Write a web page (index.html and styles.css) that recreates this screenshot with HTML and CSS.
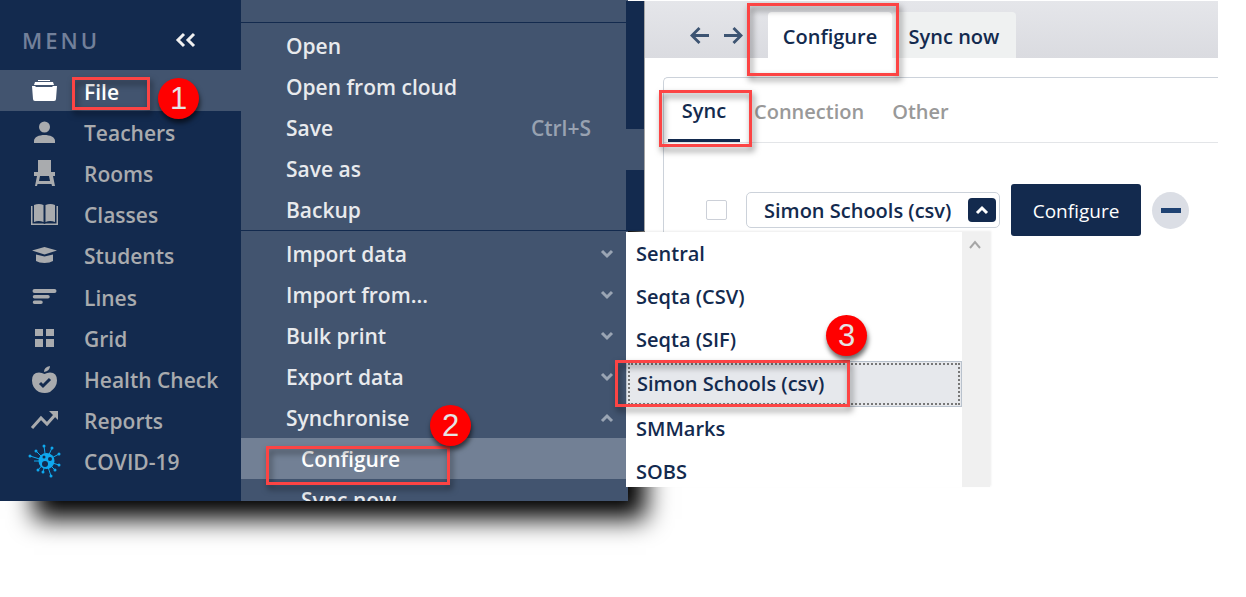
FILE: index.html
```html
<!DOCTYPE html>
<html lang="en">
<head>
  <meta charset="utf-8">
  <title>Synchronise - Configure</title>
  <link rel="stylesheet" href="styles.css">
</head>
<body>
  <div class="app">
    <div class="panels">
      <nav class="sidebar">
        <header class="sidebar-header">
          <h1>MENU</h1>
          <button class="collapse" aria-label="Collapse menu">
            <svg width="22" height="16" viewBox="0 0 22 16"><path d="M9 2L3 8l6 6M19 2l-6 6 6 6"/></svg>
          </button>
        </header>
        <ul class="nav-list">
          <li class="active"><a href="#"><svg viewBox="0 0 30 30"><path d="M8 3h12v1H8zM5 5h18l1 3H4zM2 9h3l1 1h16l1-1h4l-1 13q0 2-2 2H5q-2 0-2-2z"/></svg>File</a></li>
          <li><a href="#"><svg viewBox="0 0 30 30"><circle cx="14.5" cy="9" r="5.5"/><path d="M4 25v-2c0-4 5-6 10.500-6S25 19 25 23v2z"/></svg>Teachers</a></li>
          <li><a href="#"><svg viewBox="0 0 30 30"><path d="M8 1h13v12h4v4h-2l2 10h-3l-.5-2h-14L7 27H5l2-10H4v-4h4zM10 17l-1 5h11l-1-5z"/></svg>Rooms</a></li>
          <li><a href="#"><svg viewBox="0 0 30 30"><path d="M4 5q5-2 9.500 0v17q-5-2-9.500 0zM15.500 5q5-2 9.500 0v17q-5-2-9.500 0zM1 6h1.500v17.500H13l1.500 .5 1.500-.5h10.500V6H28v19H1z"/></svg>Classes</a></li>
          <li><a href="#"><svg viewBox="0 0 30 30"><path d="M2 9.500L14.500 6 27 9.500 14.500 13.500zM6 13.500l8.500 2 8.500-2V20q-3 2-8.500 2T6 20z"/></svg>Students</a></li>
          <li><a href="#"><svg viewBox="0 0 30 30"><path d="M4.500 6h20a1.500 1.500 0 0 1 0 4h-20a1.500 1.500 0 0 1 0-4zM4.500 12H18a1 1 0 0 1 0 3.500H4.500a1.500 1.500 0 0 1 0-3.500zM4.500 17.500H11a1 1 0 0 1 0 3.500H4.500a1.500 1.500 0 0 1 0-3.500z"/></svg>Lines</a></li>
          <li><a href="#"><svg viewBox="0 0 30 30"><path d="M5 5h8v7H5zM16 5h8v7h-8zM5 15h8v8H5zM16 15h8v8h-8z"/></svg>Grid</a></li>
          <li><a href="#"><svg viewBox="0 0 30 30"><path d="M14 7q0-5 6-6 0 5-6 6zM9 7.500q3 0 5.500 1.500Q17 7.500 20 7.500q7 0 7 8Q27 22 20 27q-5 2-11 0-7-4-7-11.500 0-8 7-8z"/><path class="tick" d="M10 18l3 3 7-7"/></svg>Health Check</a></li>
          <li><a href="#"><svg viewBox="0 0 30 30"><path class="line" d="M2 22l9-10 6 6 8-9"/><path d="M19 5h9v9z"/></svg>Reports</a></li>
          <li><a href="#"><svg class="virus" viewBox="0 0 30 30"><path class="spikes" d="M16 14L14-1M16 14l6-13M16 14L6 4M16 14L0 9M16 14L4 14M16 14L8 23M16 14l-3 11M16 14l5 15M16 14l9 9M16 14l13 4M16 14l13-7"/><path class="tips" d="M14-1v0M22 1v0M6 4v0M0 9v0M8 23v0M13 25v0M21 29v0M25 23v0M29 18v0M29 7v0"/><circle cx="16.500" cy="14" r="8"/><circle class="hole" cx="14" cy="10" r="1.500"/><circle class="hole" cx="20" cy="12" r="2"/><circle class="hole" cx="15" cy="17" r="3"/></svg>COVID-19</a></li>
        </ul>
      </nav>
      <div class="submenu">
        <div class="submenu-top"></div>
        <ul class="menu-group">
          <li><a href="#">Open</a></li>
          <li><a href="#">Open from cloud</a></li>
          <li><a href="#">Save <kbd>Ctrl+S</kbd></a></li>
          <li><a href="#">Save as</a></li>
          <li><a href="#">Backup</a></li>
        </ul>
        <ul class="menu-group">
          <li><a href="#">Import data <svg class="chevron" viewBox="0 0 14 10"><path d="M2 2l5 5 5-5"/></svg></a></li>
          <li><a href="#">Import from... <svg class="chevron" viewBox="0 0 14 10"><path d="M2 2l5 5 5-5"/></svg></a></li>
          <li><a href="#">Bulk print <svg class="chevron" viewBox="0 0 14 10"><path d="M2 2l5 5 5-5"/></svg></a></li>
          <li><a href="#">Export data <svg class="chevron" viewBox="0 0 14 10"><path d="M2 2l5 5 5-5"/></svg></a></li>
          <li><a href="#">Synchronise <svg class="chevron" viewBox="0 0 14 10"><path d="M2 8l5-5 5 5"/></svg></a></li>
          <li class="child current"><a href="#">Configure</a></li>
          <li class="child cut"><a href="#">Sync now</a></li>
        </ul>
      </div>
    </div>

    <div class="rail"><span class="rail-active"></span></div>

    <main class="content">
      <div class="toolbar">
        <div class="history">
          <button aria-label="Back"><svg width="19" height="19" viewBox="0 0 20 20"><path d="M20 10H2M10 2l-8 8 8 8"/></svg></button>
          <button aria-label="Forward"><svg width="19" height="19" viewBox="0 0 20 20"><path d="M0 10h18M10 2l8 8-8 8"/></svg></button>
        </div>
        <a href="#" class="page-tab selected">Configure</a>
        <a href="#" class="page-tab">Sync now</a>
      </div>
      <section class="card">
        <div class="tabs">
          <a href="#" class="selected">Sync</a>
          <a href="#">Connection</a>
          <a href="#">Other</a>
        </div>
        <div class="sync-row">
          <input type="checkbox" aria-label="Enable sync">
          <div class="combo">
            <select aria-label="System">
              <option>Simon Schools (csv)</option>
            </select>
            <span class="combo-arrow"><svg width="14" height="10" viewBox="0 0 14 10"><path d="M2 8l5-5 5 5"/></svg></span>
            <div class="dropdown">
              <ul role="listbox" aria-label="Systems">
                <li role="option">Sentral</li>
                <li role="option">Seqta (CSV)</li>
                <li role="option">Seqta (SIF)</li>
                <li role="option" class="focused" aria-selected="true">Simon Schools (csv)</li>
                <li role="option">SMMarks</li>
                <li role="option">SOBS</li>
              </ul>
              <div class="scrollbar"><svg width="14" height="10" viewBox="0 0 14 10"><path d="M2 9l5-6 5 6"/></svg></div>
            </div>
          </div>
          <button class="configure">Configure</button>
          <button class="remove" aria-label="Remove"></button>
        </div>
      </section>
    </main>

    <!-- numbered steps -->
    <div class="mark mark-file"></div>
    <div class="mark mark-menu"></div>
    <div class="mark mark-page"></div>
    <div class="mark mark-sync"></div>
    <div class="mark mark-option"></div>
    <span class="step step-1">1</span>
    <span class="step step-2">2</span>
    <span class="step step-3">3</span>
  </div>
</body>
</html>
```
FILE: styles.css
```css
:root {
  --navy: #132a4e;
  --slate: #42546f;
  --slate-light: #728095;
  --red: #fc4444;
  --grey: #a9abae;
}

* {
  margin: 0;
  padding: 0;
  box-sizing: border-box;
}

body {
  min-height: 100vh;
  background: #fff;
  color: var(--navy);
  font-family: "Open Sans", "Noto Sans", sans-serif;
  font-size: 21px;
  font-weight: 600;
  line-height: 28px;
}

a {
  color: inherit;
  text-decoration: none;
}

ul {
  list-style: none;
}

button {
  border: none;
  background: none;
  font: inherit;
  color: inherit;
}

svg {
  fill: currentColor;
  flex: none;
}

.app {
  position: relative;
  display: flex;
  align-items: flex-start;
}

.panels {
  display: flex;
  box-shadow: 26px 26px 24px -8px #000;
}

/* left menu */
.sidebar {
  width: 241px;
  padding-bottom: 19px;
  background: var(--navy);
  color: var(--grey);
}

.sidebar-header {
  display: flex;
  align-items: center;
  justify-content: space-between;
  height: 70px;
  padding: 10px 44px 0 22px;
}

.sidebar-header h1 {
  color: #72809a;
  font-size: 22px;
  font-weight: 600;
  letter-spacing: 3px;
}

.collapse {
  display: flex;
  color: #f0f0f0;
}

.collapse path {
  fill: none;
  stroke: currentColor;
  stroke-width: 3;
}

.nav-list {
  display: grid;
  grid-auto-rows: 1fr;
  height: 412px;
}

.nav-list a {
  display: flex;
  align-items: center;
  gap: 24px;
  height: 100%;
  padding: 2px 0 0 30px;
}

.nav-list svg {
  width: 30px;
  height: 30px;
  overflow: visible;
}

.nav-list .active {
  background: var(--slate);
  color: #fff;
}

.tick {
  fill: none;
  stroke: var(--navy);
  stroke-width: 3;
}

.line {
  fill: none;
  stroke: currentColor;
  stroke-width: 3;
}

.virus {
  color: #0fa8ee;
}

.spikes {
  fill: none;
  stroke: currentColor;
  stroke-width: 1;
}

.tips {
  stroke: currentColor;
  stroke-width: 3;
  stroke-linecap: round;
}

.hole {
  fill: var(--navy);
}

/* File submenu */
.submenu {
  width: 387px;
  background: var(--slate);
  color: #e8eaed;
}

.submenu-top {
  height: 22px;
}

.menu-group {
  padding-top: 2px;
  border-top: 1px solid var(--navy);
}

.menu-group a {
  display: flex;
  align-items: center;
  justify-content: space-between;
  height: 41px;
  padding: 0 14px 0 45px;
}

.menu-group kbd {
  margin-right: 23px;
  color: #98a2b1;
  font: inherit;
}

.menu-group .child a {
  padding-left: 60px;
}

.menu-group .current {
  background: var(--slate-light);
  color: #fff;
}

.menu-group .cut {
  height: 22px;
  overflow: hidden;
}

.chevron {
  width: 14px;
  height: 10px;
  color: #9aa5b4;
}

.chevron path {
  fill: none;
  stroke: currentColor;
  stroke-width: 3;
}

/* strip of the collapsed sidebar behind the page */
.rail {
  position: relative;
  width: 19px;
  height: 230px;
  margin: 1px 0 0 -2px;
  padding-top: 128px;
  border-right: 1px solid #a5a5a5;
  background: var(--navy);
}

.rail-active {
  display: block;
  height: 41px;
  background: var(--slate);
}

.content {
  position: relative;
  flex: 1;
  margin: 1px 28px 0 0;
  background: #fff;
  font-size: 20px;
}

.toolbar {
  display: flex;
  height: 57px;
  padding: 11px 0 0 45px;
  background: linear-gradient(#e5e6ea, #dadbe0);
}

.history {
  display: flex;
  align-items: center;
  gap: 15px;
  margin-right: 25px;
}

.history button {
  display: flex;
  color: #3d5472;
}

.history path {
  fill: none;
  stroke: currentColor;
  stroke-width: 3;
}

.page-tab {
  display: flex;
  align-items: center;
  justify-content: center;
  width: 124px;
  padding-top: 3px;
  border-radius: 4px 4px 0 0;
  background: #eff1f1;
}

.page-tab.selected {
  background: #fff;
}

.card {
  margin: 19px 0 0 18px;
  border: 1px solid #ccd2da;
  border-width: 1px 0 0 1px;
  border-radius: 5px 0 0 0;
}

.tabs {
  display: flex;
  height: 65px;
  padding-left: 4px;
  border-bottom: 1px solid #e3e5e8;
  color: #999;
}

.tabs a {
  display: flex;
  align-items: center;
  padding: 4px 14px 0;
}

.tabs .selected {
  justify-content: center;
  width: 72px;
  border-bottom: 3px solid var(--navy);
  color: var(--navy);
}

.sync-row {
  display: flex;
  align-items: center;
  height: 134px;
  padding-left: 42px;
}

.sync-row input {
  appearance: none;
  width: 21px;
  height: 20px;
  margin-right: 19px;
  border: 1px solid #ccd0d8;
  border-radius: 2px;
}

.combo {
  position: relative;
  width: 254px;
  margin-right: 11px;
}

.combo select {
  display: block;
  appearance: none;
  width: 100%;
  height: 36px;
  padding: 2px 0 0 17px;
  border: 1px solid #ccd2da;
  border-radius: 5px;
  background: #fff;
  color: inherit;
  font: inherit;
}

.combo-arrow {
  position: absolute;
  top: 6px;
  right: 4px;
  display: flex;
  align-items: center;
  justify-content: center;
  width: 28px;
  height: 24px;
  border-radius: 4px;
  background: var(--navy);
  color: #fff;
  pointer-events: none;
}

.combo-arrow path {
  fill: none;
  stroke: currentColor;
  stroke-width: 3;
}

.dropdown {
  position: absolute;
  top: 40px;
  left: -120px;
  display: flex;
  width: 364px;
  background: #fff;
  box-shadow: 1px -1px 2px rgba(0, 0, 0, 0.08);
}

.dropdown ul {
  flex: 1;
}

.dropdown li {
  height: 43px;
  padding: 8px 10px;
}

.dropdown li:last-child {
  height: 37px;
}

.dropdown .focused {
  height: 46px;
  border: 1px solid #b9c2cd;
  outline: 2px dotted #777;
  outline-offset: -4px;
  background: #e6e8ec;
}

.scrollbar {
  width: 28px;
  padding-left: 6px;
  background: #f0f0f0;
  color: #a6a6a6;
  line-height: 20px;
}

.scrollbar path {
  fill: none;
  stroke: currentColor;
  stroke-width: 2;
}

.configure {
  width: 130px;
  height: 52px;
  margin-right: 11px;
  padding-top: 2px;
  border-radius: 3px;
  background: var(--navy);
  color: #fff;
  font-size: 19px;
  font-weight: 400;
}

.remove {
  display: flex;
  align-items: center;
  justify-content: center;
  width: 37px;
  height: 37px;
  border-radius: 50%;
  background: #dbdee5;
}

.remove::before {
  content: "";
  width: 20px;
  height: 5px;
  background: #1f4272;
}

/* callouts drawn over the page */
.mark {
  position: absolute;
  border: 3px solid var(--red);
  filter: drop-shadow(2px 4px 3px rgba(0, 0, 0, 0.5));
}

.mark-file {
  top: 77px;
  left: 72px;
  width: 78px;
  height: 33px;
}

.mark-menu {
  top: 446px;
  left: 266px;
  width: 184px;
  height: 39px;
}

.mark-page {
  top: 3px;
  left: 747px;
  width: 152px;
  height: 73px;
}

.mark-sync {
  top: 90px;
  left: 659px;
  width: 93px;
  height: 57px;
}

.mark-option {
  top: 360px;
  left: 615px;
  width: 235px;
  height: 47px;
}

.step {
  position: absolute;
  width: 41px;
  height: 41px;
  border-radius: 50%;
  background: #f00;
  color: #e4e4e4;
  box-shadow: 1px 4px 5px rgba(0, 0, 0, 0.6);
  font: 31px/41px "Liberation Sans", Arial, sans-serif;
  text-align: center;
}

.step-1 {
  top: 78px;
  left: 158px;
}

.step-2 {
  top: 405px;
  left: 430px;
}

.step-3 {
  top: 315px;
  left: 826px;
}
```
